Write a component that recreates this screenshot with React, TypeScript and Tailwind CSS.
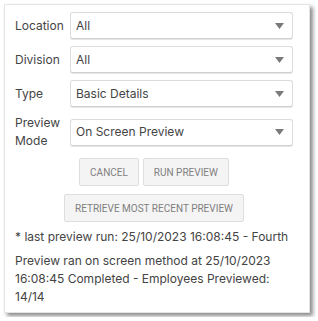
import { useState } from "react";

const fields = [
  { label: "Location", value: "All", options: ["All"] },
  { label: "Division", value: "All", options: ["All"] },
  { label: "Type", value: "Basic Details", options: ["Basic Details"] },
  { label: "Preview Mode", value: "On Screen Preview", options: ["On Screen Preview"] },
];

function SelectBox({ value }: { value: string }) {
  return (
    <div className="flex h-[27px] flex-1 items-center justify-between rounded-[3px] border border-[#dcdcdc] border-b-[#cfcfcf] bg-white pl-[5px] pr-[8px] shadow-[0_1px_0_#e6e6e6]">
      <span className="text-[12px] text-[#444]">{value}</span>
      <svg width="9" height="6" viewBox="0 0 9 6">
        <polygon points="0,0 9,0 4.5,6" fill="#7a7a7a" />
      </svg>
    </div>
  );
}

function Btn({ children }: { children: React.ReactNode }) {
  return (
    <button className="h-[28px] rounded-[2px] border border-[#dedede] bg-[#f4f4f4] px-[10px] font-['Roboto',Arial,sans-serif] text-[10px] uppercase text-[#808080]">
      {children}
    </button>
  );
}

export default function App() {
  const [ran] = useState("25/10/2023 16:08:45");

  return (
    <div className="bg-white p-[4px] font-['Inter',sans-serif]">
      <div className="w-[306px] border border-[#e4e4e4] bg-white pb-[6px] pl-[10px] pr-[16px] pt-[7px] shadow-[3px_3px_4px_rgba(0,0,0,0.45)]">
        <div className="flex flex-col gap-[7px]">
          {fields.map((f) => (
            <div key={f.label} className="flex items-center">
              <div className="w-[55px] text-[12px] leading-[18px] text-[#444]">
                {f.label}
              </div>
              <SelectBox value={f.value} />
            </div>
          ))}
        </div>

        <div className="mt-[8px] flex flex-col items-center gap-[8px]">
          <div className="flex gap-[4px]">
            <Btn>Cancel</Btn>
            <Btn>Run Preview</Btn>
          </div>
          <Btn>Retrieve Most Recent Preview</Btn>
        </div>

        <p className="mt-[6px] whitespace-nowrap text-[12px] leading-[18px] text-[#444]">
          * last preview run: {ran} - Fourth
        </p>
        <p className="mt-[6px] text-[12px] leading-[18px] text-[#444]">
          Preview ran on screen method at 25/10/2023 16:08:45 Completed - Employees Previewed: 14/14
        </p>
      </div>
    </div>
  );
}
